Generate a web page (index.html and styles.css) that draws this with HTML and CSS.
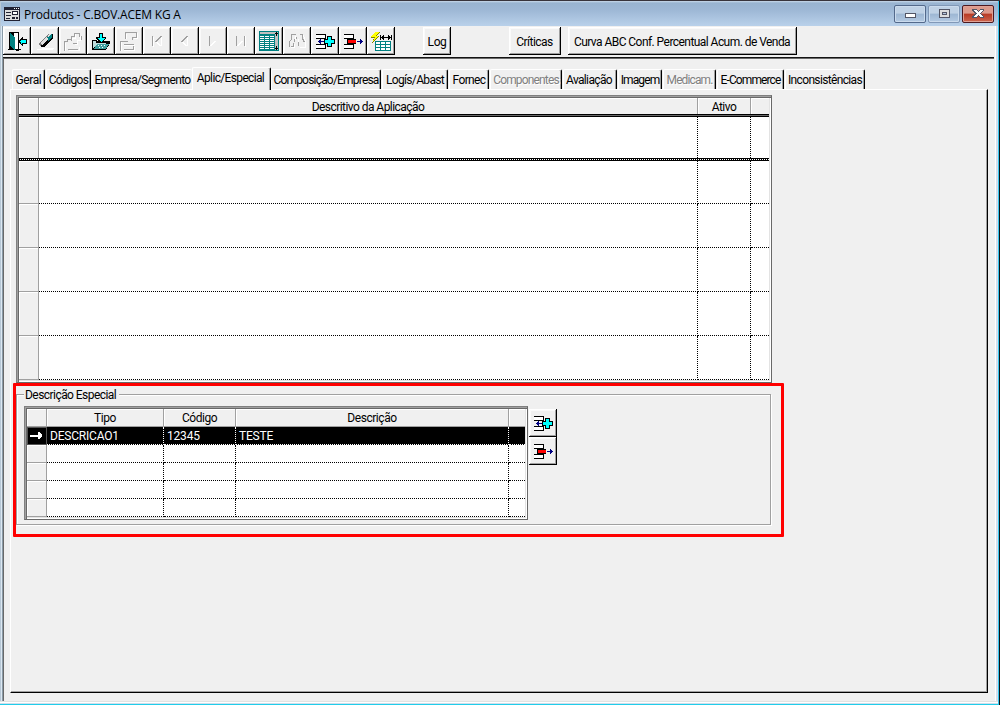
FILE: index.html
```html
<!DOCTYPE html>
<html lang="pt-BR">
<head>
  <meta charset="UTF-8">
  <title>Produtos - C.BOV.ACEM KG A</title>
  <link rel="stylesheet" href="styles.css">
</head>
<body>
  <!-- shared icons -->
  <svg width="0" height="0" class="defs">
    <symbol id="ins" viewBox="0 0 28 28">
      <path fill="#fff" d="M5 8h9v3H5zM5 18h9v3H5z"/>
      <path d="M5 7h10v5H5v-1h9V8H5zM5 17h10v5H5v-1h9v-3H5z"/>
      <path d="M13 12h3V9h5v3h3v5h-3v3h-5v-3h-3z"/>
      <path fill="#0ff" d="M14 13h3v-3h3v3h3v3h-3v3h-3v-3h-3z"/>
      <path fill="#000080" d="M7 14h6v1H7zM8 13h1v3H8zM9 12h1v5H9z"/>
    </symbol>
    <symbol id="del" viewBox="0 0 28 28">
      <path fill="#fff" d="M5 8h9v3H5zM5 18h9v3H5z"/>
      <path d="M5 7h10v5H5v-1h9V8H5zM5 17h10v5H5v-1h9v-3H5zM8 12h9v5H8z"/>
      <path fill="#f00" d="M9 13h8v3H9z"/>
      <path fill="#000080" d="M18 14h6v1h-6zM22 13h1v3h-1zM21 12h1v5h-1z"/>
    </symbol>
  </svg>

  <div class="window">
    <div class="titlebar">
      <svg class="app-icon" width="16" height="14"><path fill="#223" d="M0 0h16v14H0z"/><path fill="#ddd" d="M1 3h14v10H1z"/><path fill="#223" d="M2 5h5v1H2zM2 8h5v1H2zM2 11h4v1H2zM8 4h6v4H8zM8 10h3v2H8zM12 10h2v2h-2z"/><path fill="#fff" d="M9 5h4v2H9zM10 1h1v1h-1zM12 1h1v1h-1zM14 1h1v1h-1z"/></svg>
      <span class="title">Produtos - C.BOV.ACEM KG A</span>
      <div class="controls">
        <span class="ctl"><svg width="11" height="5"><path fill="#535666" d="M0 0h11v5H0z"/><path fill="#fff" d="M1 1h9v3H1z"/></svg></span>
        <span class="ctl off"><svg width="11" height="9"><path fill="#535666" d="M0 0h11v9H0z"/><path fill="#ddd" d="M1 1h9v7H1z"/><path fill="#535666" d="M3 3h5v3H3z"/><path fill="#b5c6dc" d="M4 4h3v1H4z"/></svg></span>
        <span class="ctl close"><svg width="12" height="9"><path fill="#535666" d="M0 0h4l2 2 2-2h4v2L9 4.500l3 2.500v2H8L6 7 4 9H0V7l3-2.500L0 2z"/><path fill="#fff" d="M1 1h3l2 2 2-2h3L7.500 4.500 11 8H8L6 6 4 8H1l3.500-3.500z"/></svg></span>
      </div>
    </div>

    <div class="toolbar">
      <button class="tool"><svg viewBox="0 0 28 28"><path d="M6 5h10v19h-3V23H6z"/><path fill="#fff" d="M11 6h4v16h-4z"/><path fill="#008080" d="M7 6l5 4v13l-5-4z"/><path d="M5 22h5v1H5zM15 22h3v1h-3z"/><path d="M15 14l5-5v3h4v5h-4v3z"/><path fill="#0ff" d="M17 14l2-2v1h4v3h-4v2z"/></svg></button>
      <button class="tool"><svg viewBox="0 0 28 28"><path fill="#fff" d="M6 22h16v1H6zM11 21h12v1H11z"/><path d="M8 17l2 3h3l9-9V7h-2l-1 1z"/><path fill="#808080" d="M8 16l9-9h4l-10 10-1 2-2-1z"/><path fill="#008080" d="M15 11l4-4h2v3l-4 4z"/><path fill="#e0e0e0" d="M9 16l6-6 2 2-6 6zM17 8l2-1h1l-3 3z"/></svg></button>
      <button class="tool"><svg viewBox="0 0 28 28"><path class="lo" d="M5.500 24V14.500h3v-2h4M12.500 14V9.500h3v-3h5v3h2v3M14 16.500h4v-3M9 22.500h10"/><path class="hi" d="M6.500 24v-8M13.500 13v-2h3V7M21.500 9v4h-3v4h-3M10 23.500h10v-4"/></svg></button>
      <button class="tool"><svg viewBox="0 0 28 28"><path d="M5 13h5v1h13v2l-4 7H5z"/><path fill="#c0dede" d="M6 14h3v2h10v1h-9l-4 5z"/><path fill="#40a0a0" d="M10 17h12l-3 5H7z"/><path fill="#fff" d="M11 18h1v1h-1zM14 18h1v1h-1zM17 18h1v1h-1zM12 20h1v1h-1zM15 20h1v1h-1z"/><path d="M12 6h4v4h3v2l-5 4-5-4v-2h3z"/><path fill="#0ff" d="M13 7h2v4h3l-4 4-4-4h3z"/></svg></button>
      <button class="tool"><svg viewBox="0 0 28 28"><path class="lo" d="M5.500 24V14.500h7M10.500 12V5.500h11v5h-4v2M9 22.500h9v-4M9 17.500h10"/><path class="hi" d="M6.500 24v-9M11.500 12V6.500M22.500 6v5h-4M9 18.500h11M9 23.500h10v-4"/></svg></button>
      <button class="tool"><svg viewBox="0 0 28 28"><path class="lo" d="M9.500 9v10M12.500 15l6-6"/><path class="hi" d="M10.500 10v10M18.500 10v9M13.500 15l4 4"/></svg></button>
      <button class="tool"><svg viewBox="0 0 28 28"><path class="lo" d="M10.500 15l6-6"/><path class="hi" d="M16.500 10v9M11.500 15l4 4"/></svg></button>
      <button class="tool"><svg viewBox="0 0 28 28"><path class="lo" d="M10.500 9v10"/><path class="hi" d="M11.500 19l5-5"/></svg></button>
      <button class="tool"><svg viewBox="0 0 28 28"><path class="lo" d="M9.500 9v10M17.500 9v10"/><path class="hi" d="M10.500 19l5-5M18.500 9v11"/></svg></button>
      <button class="tool"><svg viewBox="0 0 28 28"><path fill="#008080" d="M4 4h20v20H4z"/><path fill="#c0c0c0" d="M5 5h15v2H5zM20 5h3v18h-3z"/><path stroke="#fff" stroke-dasharray="4 1" d="M5 9.500h14M5 11.500h14M5 13.500h14M5 15.500h14M5 17.500h14M5 19.500h14M5 21.500h14"/><path d="M21 5h1v4h-1zM20 6h3v1h-3zM21 19h1v4h-1zM20 21h3v1h-3z"/></svg></button>
      <button class="tool"><svg viewBox="0 0 28 28"><path class="lo" d="M6.500 20v-5l2-3V7.500h4M8 19.500h2v-4M13.500 12V9.500M16.500 7.500h3v4l2 4M11.500 12v3M15.500 19v-4"/><path class="hi" d="M7.500 20.500h4v-4M12.500 9v4M20.500 8l2 7v5h-6M15.500 12v3"/></svg></button>
      <button class="tool"><svg viewBox="0 0 28 28"><use href="#ins"/></svg></button>
      <button class="tool"><svg viewBox="0 0 28 28"><use href="#del"/></svg></button>
      <button class="tool"><svg viewBox="0 0 28 28"><path fill="#808000" d="M9 5h4l-3 4h3l-8 7 2-5H4z"/><path fill="#ff0" d="M8 5h4l-3 4h3l-6 5 2-4H4z"/><path d="M13 8h1v5h-1zM24 8h1v5h-1zM14 10h10v1H14zM15 9h1v3h-1zM16 8h1v5h-1zM22 9h1v3h-1zM21 8h1v5h-1z"/><path fill="#008080" d="M8 14h16v10H8z"/><path fill="#fff" d="M9 15h4v2H9zM14 15h4v2h-4zM19 15h4v2h-4zM9 18h4v2H9zM14 18h4v2h-4zM19 18h4v2h-4zM9 21h4v2H9zM14 21h4v2h-4zM19 21h4v2h-4z"/></svg></button>
      <button class="text-btn log">Log</button>
      <button class="text-btn criticas">Críticas</button>
      <button class="text-btn curva">Curva ABC Conf. Percentual Acum. de Venda</button>
    </div>

    <div class="workspace">
      <div class="tabs">
        <div class="tab t-geral">Geral</div>
        <div class="tab t-codigos">Códigos</div>
        <div class="tab t-empresa">Empresa/Segmento</div>
        <div class="tab t-aplic active">Aplic/Especial</div>
        <div class="tab t-comp">Composição/Empresa</div>
        <div class="tab t-logis">Logís/Abast</div>
        <div class="tab t-fornec">Fornec</div>
        <div class="tab t-componentes disabled">Componentes</div>
        <div class="tab t-aval">Avaliação</div>
        <div class="tab t-imagem">Imagem</div>
        <div class="tab t-medicam disabled">Medicam.</div>
        <div class="tab t-ecom">E-Commerce</div>
        <div class="tab t-incons">Inconsistências</div>
      </div>

      <div class="panel">
        <div class="grid aplicacao">
          <div class="row head"><span></span><span>Descritivo da Aplicação</span><span>Ativo</span><span></span></div>
          <div class="row current"><span></span><span></span><span></span><span></span></div>
          <div class="row"><span></span><span></span><span></span><span></span></div>
          <div class="row"><span></span><span></span><span></span><span></span></div>
          <div class="row"><span></span><span></span><span></span><span></span></div>
          <div class="row"><span></span><span></span><span></span><span></span></div>
          <div class="row"><span></span><span></span><span></span><span></span></div>
        </div>

        <div class="highlight">
          <div class="group">
            <div class="legend">Descrição Especial</div>
            <div class="group-body">
              <div class="grid especial">
                <div class="row head"><span></span><span>Tipo</span><span>Código</span><span>Descrição</span><span></span></div>
                <div class="row selected"><span><svg width="12" height="7"><path fill="#fff" d="M0 3h8V0h1l3 3v1L9 7H8V5H0z"/></svg></span><span>DESCRICAO1</span><span>12345</span><span>TESTE</span><span></span></div>
                <div class="row"><span></span><span></span><span></span><span></span><span></span></div>
                <div class="row"><span></span><span></span><span></span><span></span><span></span></div>
                <div class="row"><span></span><span></span><span></span><span></span><span></span></div>
                <div class="row"><span></span><span></span><span></span><span></span><span></span></div>
              </div>
              <div class="side-buttons">
                <button class="tool"><svg viewBox="0 0 28 28"><use href="#ins"/></svg></button>
                <button class="tool"><svg viewBox="0 0 28 28"><use href="#del"/></svg></button>
              </div>
            </div>
          </div>
        </div>
      </div>
    </div>
  </div>
</body>
</html>
```

FILE: styles.css
```css
* { box-sizing: border-box; margin: 0; padding: 0; }
body {
  width: 1000px;
  height: 705px;
  overflow: hidden;
  background: #f0f0f0;
  font-family: Roboto, "Liberation Sans", sans-serif;
  font-size: 12px;
  line-height: 14px;
  letter-spacing: -0.55px;
  color: #000;
  white-space: nowrap;
}
svg { display: block; shape-rendering: crispEdges; }
.defs { display: none; }
.lo { fill: none; stroke: #a0a0a0; }
.hi { fill: none; stroke: #fff; }

/* window frame */
.window {
  height: 705px;
  padding: 0 5px 4px 3px;
  border-top: 1px solid #38343c;
  background:
    linear-gradient(to bottom, #e3e3e3 1px, #fff 1px, #fff 2px, #cfdcea 2px, #cfdcea 3px, #22cdea 3px) left bottom / 998px 4px no-repeat,
    linear-gradient(to right, #b8c8d6 1px, #dce8f2 1px, #dce8f2 2px, #8a9ba8 2px) left top / 3px 100% no-repeat,
    linear-gradient(to right, #fff 1px, #d4dfec 1px, #d4dfec 3px, #35c5ee 3px, #35c5ee 4px, #111 4px) right top / 5px 100% no-repeat,
    #f0f0f0;
}
.titlebar {
  display: flex;
  align-items: center;
  height: 25px;
  margin: 0 -3px 0 -2px;
  padding: 1px 4px 0 3px;
  background: linear-gradient(#c9d9ea 0, #99b4d1 2px, #9db7d5 35%, #b9d1ea 100%);
}
.title {
  flex: 1;
  margin: 2px 0 0 4px;
  font-family: "Open Sans", "Noto Sans", sans-serif;
  letter-spacing: -0.2px;
}
.controls { display: flex; gap: 2px; margin-top: -1px; }
.ctl {
  display: flex;
  align-items: center;
  justify-content: center;
  width: 32px;
  height: 18px;
  border: 1px solid #53698b;
  border-radius: 2px;
  box-shadow: inset 0 0 0 1px #cbdbed;
  background: linear-gradient(#bfd1e5 45%, #9db6d3 50%, #b4cae3);
}
.ctl:first-child svg { margin-top: 3px; }
.ctl.off { border-color: #8198b7; }
.ctl.close {
  border-color: #4c1920;
  box-shadow: inset 0 0 0 1px #dfa195;
  background: linear-gradient(#dc9a8c 45%, #b83a24 50%, #cd6650);
}

/* toolbar */
.toolbar { display: flex; height: 31px; padding-top: 1px; }
button { font: inherit; color: inherit; letter-spacing: inherit; background: #f0f0f0; border: 0; }
.tool, .text-btn {
  height: 28px;
  border-right: 1px solid #000;
  border-bottom: 1px solid #000;
  box-shadow: inset 1px 1px #fff, inset -1px -1px #a0a0a0, inset 2px 2px #fafafa;
}
.tool { width: 28px; overflow: hidden; }
.tool svg { width: 28px; height: 28px; }
.text-btn { padding-top: 3px; }
.log { width: 28px; margin-left: 28px; padding-left: 1px; letter-spacing: -0.4px; }
.criticas { width: 52px; margin-left: 58px; }
.curva { width: 229px; margin-left: 7px; }

/* tabbed area */
.workspace {
  width: 991px;
  height: 644px;
  padding: 8px 6px 0 6px;
  border-top: 2px solid #696969;
  border-top-style: groove;
  border-left: 1px solid #696969;
}
.tabs { display: flex; align-items: flex-end; height: 22px; padding-left: 2px; }
.tab {
  height: 20px;
  margin-right: 1px;
  padding-top: 3px;
  text-align: center;
  letter-spacing: -0.65px;
  border-top: 1px solid #fff;
  border-left: 1px solid #fff;
  border-right: 1px solid #000;
  box-shadow: inset -1px 0 #a0a0a0;
  border-radius: 2px 2px 0 0;
}
.tab.active { height: 23px; margin-bottom: -1px; padding-top: 3px; margin-right: 0; background: #f0f0f0; }
.tab.disabled { color: #808080; text-shadow: 1px 1px #fff; }
.tab.t-geral { width: 33px; letter-spacing: -0.4px; }
.t-codigos { width: 45px; }
.t-empresa { width: 100px; margin-right: 0; border-right: 0; box-shadow: none; }
.t-aplic { width: 79px; padding-right: 2px; }
.tab.t-comp { width: 110px; letter-spacing: -0.8px; }
.t-logis { width: 66px; }
.t-fornec { width: 40px; }
.tab.t-componentes { width: 72px; letter-spacing: -0.85px; }
.t-aval { width: 54px; padding-right: 2px; }
.tab.t-imagem { width: 44px; letter-spacing: -0.9px; }
.tab.t-medicam { width: 53px; letter-spacing: -0.9px; }
.tab.t-ecom { width: 67px; letter-spacing: -0.9px; }
.t-incons { width: 80px; }

.panel {
  width: 978px;
  height: 604px;
  padding: 5px 0 0 2px;
  border: 1px solid #fff;
  border-right-color: #000;
  border-bottom-color: #000;
  box-shadow: inset -1px -1px #a0a0a0;
}

/* data grids */
.grid {
  border: 1px solid #808080;
  border-right-color: #696969;
  border-bottom-color: #696969;
  box-shadow: inset 1px 1px #a0a0a0, inset 2px 2px #696969, inset -1px -1px #fff, inset -2px -2px #e3e3e3;
  padding: 2px;
}
.row { display: grid; }
.row span {
  background: #fff;
  border-right: 1px dotted #000;
  border-bottom: 1px dotted #000;
}
.row span:first-child, .head span {
  background: #f0f0f0;
  border-right: 1px solid #a0a0a0;
  border-bottom: 1px solid #a0a0a0;
  box-shadow: inset 1px 1px #fff;
}
.row span:last-child { border-right: 0; }
.head span { text-align: center; }
.aplicacao { width: 756px; height: 288px; margin-left: 3px; }
.aplicacao .row { width: 750px; grid-template-columns: 20px 659px 53px 18px; height: 44px; }
.aplicacao .head { height: 19px; border-bottom: 3px double #000; background: #696969; }
.aplicacao .head span { padding-top: 2px; border-bottom: 0; }
.aplicacao .current {
  border-bottom: 3px double #000;
  background: repeating-linear-gradient(to right, #000 0, #000 1px, #fff 1px, #fff 2px);
}
.aplicacao .current span { border-bottom: 0; }
.aplicacao .current + .row { height: 43px; }

.highlight {
  width: 771px;
  height: 154px;
  border: 3px solid #f00;
  border-radius: 1px;
}
.group {
  width: 755px;
  height: 131px;
  margin: 8px 0 0 0;
  border: 1px solid #a0a0a0;
  box-shadow: inset 1px 1px #fff, 1px 1px #fff;
}
.legend {
  width: 95px;
  height: 14px;
  margin: -7px 0 0 7px;
  padding-left: 1px;
  background: #f0f0f0;
}
.group-body { display: flex; padding: 4px 0 0 7px; gap: 1px; }
.especial { width: 504px; height: 114px; }
.especial .row { width: 498px; grid-template-columns: 20px 117px 72px 273px 16px; height: 18px; }
.especial .head span { padding-top: 2px; letter-spacing: -0.45px; }
.especial .selected span {
  padding: 2px 0 0 3px;
  background: #000;
  color: #fff;
  letter-spacing: -0.2px;
  border-right-color: #fff;
  border-bottom-color: #fff;
}
.especial .selected span:first-child { padding: 5px 0 0 3px; border-color: #555; box-shadow: inset 1px 1px #555; }
.side-buttons { padding-top: 3px; }
.side-buttons .tool { display: block; }
```
